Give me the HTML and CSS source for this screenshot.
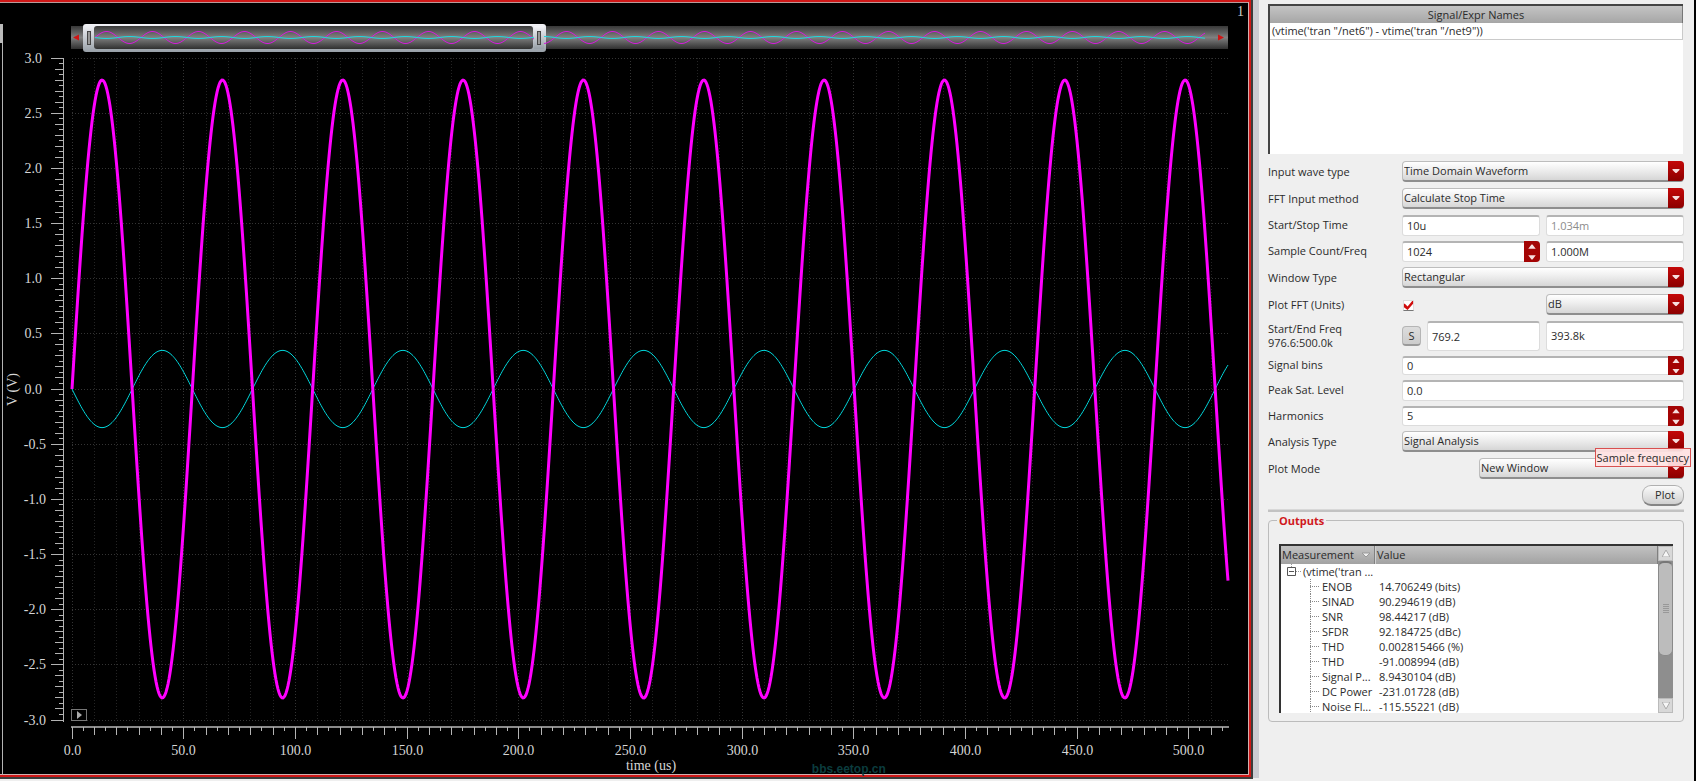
FILE: index.html
```html
<!DOCTYPE html>
<html lang="en">
<head>
<meta charset="utf-8">
<title>Spectrum</title>
<link rel="stylesheet" href="styles.css">
</head>
<body>
<div class="app">
  <main class="graph">
    <div class="graph-inner">
      <svg class="plot" id="plot" role="img" aria-label="Transient waveforms, voltage over time"></svg>
      <span class="page-number">1</span>
      <span class="watermark">bbs.eetop.cn</span>
    </div>
  </main>
  <div class="splitter"></div>
  <aside class="panel">
    <table class="signals">
      <thead><tr><th>Signal/Expr Names</th></tr></thead>
      <tbody><tr><td>(vtime('tran "/net6") - vtime('tran "/net9"))</td></tr></tbody>
    </table>

    <form class="form">
      <label for="wave">Input wave type</label>
      <div class="combo full"><select id="wave"><option>Time Domain Waveform</option></select><svg class="drop" viewBox="0 0 15 20"><path d="M4 8h7v1l-3 3h-1l-3-3z"/></svg></div>

      <label for="method">FFT Input method</label>
      <div class="combo full"><select id="method"><option>Calculate Stop Time</option></select><svg class="drop" viewBox="0 0 15 20"><path d="M4 8h7v1l-3 3h-1l-3-3z"/></svg></div>

      <label for="start">Start/Stop Time</label>
      <input class="field" id="start" value="10u">
      <input class="field muted" aria-label="Stop time" value="1.034m">

      <label for="count">Sample Count/Freq</label>
      <div class="spin"><input class="field" id="count" value="1024"><svg class="drop" viewBox="0 0 15 19"><path d="M4 7l3-4h1l3 4zM4 13h7l-3 4h-1z"/></svg></div>
      <input class="field" aria-label="Sample frequency" value="1.000M">

      <label for="window">Window Type</label>
      <div class="combo full"><select id="window"><option>Rectangular</option></select><svg class="drop" viewBox="0 0 15 20"><path d="M4 8h7v1l-3 3h-1l-3-3z"/></svg></div>

      <label for="fft">Plot FFT (Units)</label>
      <div class="tick"><input type="checkbox" id="fft" checked><svg class="tick-mark" viewBox="0 0 12 12"><path d="M1 4l1 0 3 3 5-6h1v3L5 11 1 8z"/></svg></div>
      <div class="combo"><select aria-label="FFT units"><option>dB</option></select><svg class="drop" viewBox="0 0 15 20"><path d="M4 8h7v1l-3 3h-1l-3-3z"/></svg></div>

      <label for="sfreq">Start/End Freq<br>976.6:500.0k</label>
      <div class="freq"><button type="button" class="small-button">S</button><input class="field" id="sfreq" value="769.2"></div>
      <input class="field" aria-label="End frequency" value="393.8k">

      <label for="bins">Signal bins</label>
      <div class="spin full"><input class="field" id="bins" value="0"><svg class="drop" viewBox="0 0 15 19"><path d="M4 7l3-4h1l3 4zM4 13h7l-3 4h-1z"/></svg></div>

      <label for="sat">Peak Sat. Level</label>
      <input class="field full" id="sat" value="0.0">

      <label for="harm">Harmonics</label>
      <div class="spin full"><input class="field" id="harm" value="5"><svg class="drop" viewBox="0 0 15 19"><path d="M4 7l3-4h1l3 4zM4 13h7l-3 4h-1z"/></svg></div>

      <label for="analysis">Analysis Type</label>
      <div class="combo full"><select id="analysis"><option>Signal Analysis</option></select><svg class="drop" viewBox="0 0 15 20"><path d="M4 8h7v1l-3 3h-1l-3-3z"/></svg></div>

      <label for="mode">Plot Mode</label>
      <div class="combo full indent"><select id="mode"><option>New Window</option></select><svg class="drop" viewBox="0 0 15 20"><path d="M4 8h7v1l-3 3h-1l-3-3z"/></svg><span class="tooltip" role="tooltip">Sample frequency</span></div>

      <button type="button" class="plot-button">Plot</button>
    </form>

    <hr class="rule">

    <fieldset class="outputs">
      <legend>Outputs</legend>
      <div class="tree">
        <table class="results">
          <thead><tr><th class="measure"><span class="sorted">Measurement<svg class="sort" viewBox="0 0 8 6"><path d="M0 1h8l-4 4z"/></svg></span></th><th>Value</th></tr></thead>
          <tbody>
            <tr class="root"><td colspan="2"><svg class="toggle" viewBox="0 0 14 15"><path class="guide" d="M4.500 0v3M9 7.500h5"/><path d="M.5 3.500h8v8h-8zM2 7.500h5"/></svg>(vtime('tran ...</td></tr>
            <tr><td class="leaf">ENOB</td><td>14.706249 (bits)</td></tr>
            <tr><td class="leaf">SINAD</td><td>90.294619 (dB)</td></tr>
            <tr><td class="leaf">SNR</td><td>98.44217 (dB)</td></tr>
            <tr><td class="leaf">SFDR</td><td>92.184725 (dBc)</td></tr>
            <tr><td class="leaf">THD</td><td>0.002815466 (%)</td></tr>
            <tr><td class="leaf">THD</td><td>-91.008994 (dB)</td></tr>
            <tr><td class="leaf">Signal P...</td><td>8.9430104 (dB)</td></tr>
            <tr><td class="leaf">DC Power</td><td>-231.01728 (dB)</td></tr>
            <tr><td class="leaf">Noise Fl...</td><td>-115.55221 (dB)</td></tr>
          </tbody>
        </table>
        <div class="scrollbar">
          <button type="button" class="arrow" aria-label="Scroll up"><svg viewBox="0 0 8 7"><path d="M0 7h8L4 0z"/></svg></button>
          <div class="track"><div class="thumb"><svg viewBox="0 0 6 9"><path d="M0 .5h6M0 2.500h6M0 4.500h6M0 6.500h6M0 8.500h6"/></svg></div></div>
          <button type="button" class="arrow" aria-label="Scroll down"><svg viewBox="0 0 8 7"><path d="M0 0h8L4 7z"/></svg></button>
        </div>
      </div>
    </fieldset>
  </aside>
</div>
<script src="plot.js"></script>
</body>
</html>
```
FILE: styles.css
```css
* { box-sizing: border-box; }

body {
  margin: 0;
  background: #efefef;
  color: #2b2b2b;
  font: 11px/14px "Open Sans", "Noto Sans", sans-serif;
}

input, select, button { font: inherit; color: inherit; }

.app {
  display: grid;
  grid-template-columns: minmax(0, 1fr) 6px 437px;
  min-height: 100vh;
}

/* waveform window */
.graph {
  display: flex;
  margin-bottom: 2px;
  border: solid #3c3c3c;
  border-width: 0 2px 2px 0;
}

.graph-inner {
  position: relative;
  flex: 1;
  background: #000;
  border: solid #cf1717;
  border-width: 2px 2px 2px 0;
  box-shadow: inset -1px -1px #d0b0b0, inset 0 1px #b89a9a;
}

.plot {
  position: absolute;
  inset: 0;
  width: 100%;
  height: 100%;
  font: 14px "Liberation Serif", serif;
}

.plot text { fill: #d6d6d6; }
.plot .grid { stroke: #242424; stroke-dasharray: 1 2; }
.plot .grid.major { stroke: #343434; }
.plot .axis { stroke: #b4b4b4; fill: none; }
.plot .bar { stroke: #8a8a8a; stroke-width: 2; }
.plot .a { stroke: #f0f; stroke-width: 3; fill: none; }
.plot .b { stroke: #00d8dc; fill: none; }
.plot .mini { stroke-width: 1; fill: none; }
.plot .mini.a { stroke: #d41cdc; }
.plot .mini.b { stroke: #20d8e0; }

.page-number {
  position: absolute;
  top: 2px;
  right: 5px;
  font: 14px/16px "Liberation Serif", serif;
  color: #cfcfcf;
}

.watermark {
  position: absolute;
  left: 65%;
  bottom: -3px;
  font: bold 12px/17px "Liberation Sans", sans-serif;
  color: #0b3c3e;
}

.splitter { background: #cbcbd2; margin-bottom: 3px; }

/* side panel */
.panel {
  padding: 4px 10px 0 9px;
  border-right: 2px solid #000;
}

.signals {
  display: block;
  height: 150px;
  margin-right: 1px;
  background: #fff;
  border: solid #444;
  border-width: 2px 0 0 2px;
}

.signals thead, .signals tbody, .signals tr, .signals th, .signals td { display: block; padding: 0; }
.signals th { height: 17px; font-weight: 400; line-height: 17px; background: linear-gradient(#c4c4c4, #a6a6a6); border-right: 1px solid #777; }
.signals td { height: 17px; padding-left: 2px; line-height: 15px; border: solid #cacaca; border-width: 0 1px 1px 0; }

.form {
  display: grid;
  grid-template-columns: 128px minmax(0, 1fr) minmax(0, 1fr);
  grid-template-rows: 22px 22px 21px 21px 22px 22px 30px 19px 21px 20px 22px 22px 22px;
  gap: 5px 6px;
  margin-top: 7px;
  align-items: stretch;
}

.form label { grid-column: 1; align-self: center; padding-bottom: 1px; white-space: nowrap; }
.full { grid-column: 2 / 4; }
.indent { margin-left: 77px; }

.field {
  width: 100%;
  min-width: 0;
  padding: 0 4px 1px;
  background: #fff;
  border: 1px solid #dcdcdc;
  border-top: 2px solid #b4b4b4;
  border-radius: 3px;
}

.muted { color: #8c8c8c; }

.combo, .spin, .freq, .tick { position: relative; display: flex; align-items: stretch; }

.combo select {
  width: 100%;
  height: 21px;
  padding: 0 20px 0 1px;
  appearance: none;
  border: 1px solid #bdbdbd;
  border-bottom: 2px solid #8e8e8e;
  border-radius: 4px;
  background: linear-gradient(#fff, #f0f0f0 40%, #d6d6d6);
}

.drop {
  position: absolute;
  top: 0;
  right: 0;
  width: 16px;
  height: 20px;
  background: linear-gradient(#c40808, #8c0000);
  border-radius: 0 4px 4px 0;
}

.spin .drop { height: 100%; background: #a40404; }
.drop path { fill: #f6dede; }

.tick { align-items: center; }
.tick input { appearance: none; width: 11px; height: 11px; margin: 0 1px; background: #fff; border: 1px solid #ddd; border-bottom-color: #777; }
.tick-mark { position: absolute; left: 1px; width: 11px; height: 11px; pointer-events: none; }
.tick-mark path { fill: #d00c0c; }

.freq { gap: 6px; align-items: center; }
.freq .field { height: 100%; }

.small-button {
  flex: none;
  width: 19px;
  height: 20px;
  padding: 0;
  border: 1px solid #b5b5b5;
  border-bottom: 2px solid #9a9a9a;
  border-radius: 4px;
  background: linear-gradient(#ddd, #ccc);
}

.plot-button {
  grid-column: 3;
  justify-self: end;
  width: 42px;
  height: 21px;
  padding: 0 0 0 4px;
  border: 1px solid #b0b0b0;
  border-bottom: 2px solid #858585;
  border-radius: 9px;
  background: linear-gradient(#fafafa, #d0d0d0);
}

.tooltip {
  position: absolute;
  top: -10px;
  right: -7px;
  z-index: 2;
  padding: 0 1px;
  line-height: 17px;
  border: 1px solid #d85050;
  background: rgba(255, 226, 226, .94);
  white-space: nowrap;
}

.rule { height: 3px; margin: 2px 0 2px; border: 0; border-top: 1px solid #d8d8d8; border-bottom: 2px solid #c2c2c2; }

.outputs {
  margin: 0;
  padding: 17px 10px 8px;
  border: 1px solid #bcbcbc;
  border-radius: 4px;
}

.outputs legend { padding: 0 2px; margin-left: -2px; line-height: 13px; font-weight: 700; color: #d01820; }

.tree {
  display: flex;
  height: 169px;
  background: #fff;
  border: solid #333;
  border-width: 2px 0 0 2px;
  overflow: hidden;
}

.results { flex: 1; display: block; border-collapse: collapse; overflow: hidden; }
.results thead, .results tbody { display: block; }
.results tr { display: grid; grid-template-columns: 94px minmax(0, 1fr); }
.results thead tr { height: 18px; background: linear-gradient(#c2c2c2, #a2a2a2); }
.results th { padding: 0 1px; font-weight: 400; text-align: left; line-height: 18px; border-right: 1px solid #808080; }
.results th + th { border-left: 1px solid #d0d0d0; }
.results td { padding: 0 0 0 4px; line-height: 15px; white-space: nowrap; }
.results .root td { display: flex; grid-column: 1 / 3; padding-left: 6px; gap: 2px; }
.results .leaf { position: relative; padding-left: 41px; }
.results .leaf::before {
  content: "";
  position: absolute;
  left: 29px;
  top: 0;
  width: 10px;
  height: 15px;
  background:
    repeating-linear-gradient(90deg, #888 0 1px, transparent 1px 2px) 0 7px / 10px 1px no-repeat,
    repeating-linear-gradient(#888 0 1px, transparent 1px 2px) 0 0 / 1px 15px no-repeat;
}
.sorted { display: flex; justify-content: space-between; align-items: center; padding-right: 3px; }
.sort { width: 8px; height: 6px; fill: #eee; stroke: #999; stroke-width: 1; }
.toggle { width: 14px; height: 15px; fill: none; stroke: #555; }
.toggle .guide { stroke: #999; stroke-dasharray: 1 1; }

.scrollbar { display: flex; flex-direction: column; width: 15px; }
.arrow { display: grid; place-items: center; height: 15px; padding: 0; border: 1px solid #bbb; background: #d8d8d8; }
.arrow svg { width: 8px; height: 7px; fill: #f6f6f6; stroke: #aaa; }
.track { flex: 1; background: #8e8e8e; }
.thumb { display: grid; place-items: center; height: 69%; border: 1px solid #8a8a8a; border-top: 2px solid #777; border-radius: 6px; background: #bcbcbc; }
.thumb svg { width: 6px; height: 9px; stroke: #989898; }
```
FILE: plot.js
```js
const svg = document.getElementById('plot');
const T_END = 517.6;
const PERIOD = 53.88;

function wave(x0, x1, mid, amp, period) {
  let d = '';
  for (let x = x0; x <= x1; x += 1) {
    const y = mid - amp * Math.sin(2 * Math.PI * (x - x0) / period);
    d += (d ? 'L' : 'M') + x + ' ' + y.toFixed(2);
  }
  return d;
}

function draw() {
  const w = svg.clientWidth;
  const h = svg.clientHeight;
  const left = 72;
  const right = w - 21;
  const top = 56;
  const bottom = h - 55;
  const sx = (right - left) / T_END;
  const sy = (bottom - top) / 6;
  const snap = v => Math.floor(v) + 0.5;
  const X = t => snap(left + t * sx);
  const Y = v => snap(top + (3 - v) * sy);
  const line = (c, x1, y1, x2, y2) =>
    `<line class="${c}" x1="${x1}" y1="${y1}" x2="${x2}" y2="${y2}"/>`;
  let s = '<defs><linearGradient id="g" x2="0" y2="1"><stop stop-color="#383838"/>' +
    '<stop offset=".5" stop-color="#808080"/><stop offset="1" stop-color="#303030"/></linearGradient>' +
    '<linearGradient id="f" x2="0" y2="1"><stop stop-color="#f4f4f8"/>' +
    '<stop offset="1" stop-color="#98a0a8"/></linearGradient></defs>';

  // neighbouring window edge
  s += '<rect x="0" y="22" width="3" height="19" fill="#bbb"/>' + line('axis', 2.5, 41, 2.5, h);

  // grid and axes
  for (let t = 0; t < T_END; t += 10) {
    s += line(t % 50 ? 'grid' : 'grid major', X(t), top, X(t), bottom);
  }
  for (let i = 0; i <= 12; i++) {
    const v = 3 - i / 2;
    s += line('grid major', left, Y(v), right, Y(v));
    s += `<text x="${v < 0 ? 46 : 42}" y="${Y(v) + 4}" text-anchor="end">${v.toFixed(1)}</text>`;
  }
  s += line('axis', 63.5, top, 63.5, bottom + 2);
  for (let i = 0; i <= 120; i++) {
    const len = i % 10 === 0 ? 12 : i % 2 === 0 ? 8 : 4;
    const y = Y(3 - i / 20);
    s += line('axis', 63 - len, y, 63, y);
  }
  const ax = bottom + 7;
  s += line('bar', left - 1, ax, right + 1, ax);
  for (let t = 0; t < T_END; t += 5) {
    const len = t % 50 === 0 ? 12 : t % 10 === 0 ? 8 : 4;
    s += line('axis', X(t), ax, X(t), ax + len);
    if (t % 50 === 0) {
      s += `<text x="${X(t)}" y="${ax + 28}" text-anchor="middle">${t.toFixed(1)}</text>`;
    }
  }
  s += `<text x="${(left + right) / 2 + 1}" y="${ax + 43}" text-anchor="middle">time (us)</text>`;
  s += `<text transform="translate(17 ${Y(0)}) rotate(-90)" text-anchor="middle">V (V)</text>`;

  // traces
  const mid = (top + bottom) / 2;
  s += `<path class="b" d="${wave(left, right, mid, -0.35 * sy, PERIOD * sx)}"/>`;
  s += `<path class="a" d="${wave(left, right, mid, 2.8 * sy, PERIOD * sx)}"/>`;
  s += `<rect x="71.500" y="${bottom - 10.5}" width="15" height="11" fill="#000" stroke="#777"/>` +
    `<path d="M77 ${bottom - 9}v8l5-4z" fill="#aaa"/>`;

  // time range strip
  const knob = Math.round(left + (right - left) * 0.405);
  s += `<rect x="71" y="24" width="${right - 71}" height="23" fill="url(#g)"/>`;
  s += `<path d="M86 22h${knob - 83}q3 0 3 3v22q0 3-3 3H86q-3 0-3-3v-22q0-3 3-3z" fill="url(#f)"/>`;
  s += `<rect x="94" y="24" width="${knob - 101}" height="23" rx="3" fill="url(#g)"/>`;
  s += `<path class="mini a" d="${wave(95, right - 23, 35.5, 6, 46)}"/>`;
  s += `<path class="mini b" d="${wave(95, right - 23, 35.5, -1, 46)}"/>`;
  s += `<path d="M${knob - 6} 24h10v23h-10z" fill="url(#f)"/>`;
  s += '<rect x="87.500" y="29.500" width="3" height="13" fill="#999" stroke="#444"/>';
  s += `<rect x="${knob - 2.5}" y="29.500" width="3" height="13" fill="#999" stroke="#444"/>`;
  s += '<path d="M73 35.500l6-3v6z" fill="#d01414"/>';
  s += `<path d="M${right - 4} 35.500l-6-3v6z" fill="#d01414"/>`;
  svg.innerHTML = s;
}

draw();
window.addEventListener('resize', draw);
```
